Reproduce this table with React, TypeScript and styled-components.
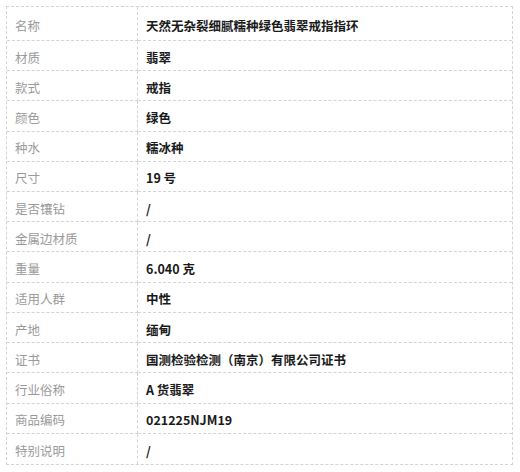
import React from 'react';
import styled, { createGlobalStyle } from 'styled-components';

interface Spec {
  label: string;
  value: string;
}

const specs: Spec[] = [
  { label: '名称', value: '天然无杂裂细腻糯种绿色翡翠戒指指环' },
  { label: '材质', value: '翡翠' },
  { label: '款式', value: '戒指' },
  { label: '颜色', value: '绿色' },
  { label: '种水', value: '糯冰种' },
  { label: '尺寸', value: '19 号' },
  { label: '是否镶钻', value: '/' },
  { label: '金属边材质', value: '/' },
  { label: '重量', value: '6.040 克' },
  { label: '适用人群', value: '中性' },
  { label: '产地', value: '缅甸' },
  { label: '证书', value: '国测检验检测（南京）有限公司证书' },
  { label: '行业俗称', value: 'A 货翡翠' },
  { label: '商品编码', value: '021225NJM19' },
  { label: '特别说明', value: '/' },
];

const GlobalStyle = createGlobalStyle`
  body {
    margin: 0;
    background: #fff;
    font-family: "Noto Sans CJK SC", "Noto Sans", sans-serif;
  }
`;

const Page = styled.div({
  padding: '6px 7px 0 6px',
});

const SpecTable = styled.div({
  display: 'grid',
  gridTemplateColumns: '131px 1fr',
  gridTemplateRows: '34px repeat(14, 1fr)',
  height: 459,
  border: '1px dashed #d4d4d4',
  borderRight: '1px dashed #d4d4d4',
  boxSizing: 'border-box',
});

const Cell = styled.div<{ $last: boolean }>(({ $last }) => ({
  display: 'flex',
  alignItems: 'center',
  paddingTop: 3,
  paddingLeft: 8,
  boxSizing: 'border-box',
  fontSize: 12.5,
  borderBottom: $last ? 'none' : '1px dashed #d4d4d4',
}));

const Label = styled(Cell)({
  color: '#9a9a9a',
  borderRight: '1px dashed #d4d4d4',
});

const Value = styled(Cell)({
  color: '#1a1a1a',
  fontWeight: 700,
});

export default function App() {
  return (
    <Page>
      <GlobalStyle />
      <SpecTable>
        {specs.map((s, i) => (
          <React.Fragment key={s.label}>
            <Label $last={i === specs.length - 1}>{s.label}</Label>
            <Value $last={i === specs.length - 1}>{s.value}</Value>
          </React.Fragment>
        ))}
      </SpecTable>
    </Page>
  );
}
